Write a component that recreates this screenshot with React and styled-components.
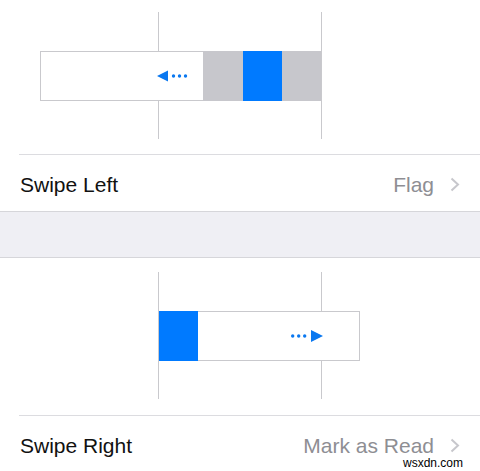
import React from "react";
import styled, { createGlobalStyle } from "styled-components";

const GlobalStyle = createGlobalStyle`
  html, body {
    margin: 0;
    padding: 0;
    background: #ffffff;
  }
  body {
    font-family: "Liberation Sans", Arial, sans-serif;
    -webkit-font-smoothing: antialiased;
  }
`;

const Page = styled.div`
  position: relative;
  width: 480px;
  height: 471px;
  overflow: hidden;
  background: #ffffff;
`;

const Section = styled.section`
  display: flex;
  flex-direction: column;
  background: #ffffff;
`;

const Preview = styled.div`
  padding: ${(p) => p.$top}px 0 ${(p) => p.$bottom}px 158px;
`;

/* the two grey guide lines mark the edges of a mail cell */
const Stage = styled.div`
  box-sizing: border-box;
  width: 164px;
  height: 127px;
  border-left: 1px solid #c9c9cd;
  border-right: 1px solid #c9c9cd;
  display: flex;
  align-items: center;
  justify-content: ${(p) => (p.$side === "left" ? "flex-end" : "flex-start")};
`;

const Strip = styled.div`
  flex-shrink: 0;
  display: flex;
  height: 50px;
  width: ${(p) => p.$width}px;
`;

const Cell = styled.div`
  flex: 1;
  box-sizing: border-box;
  display: flex;
  align-items: center;
  justify-content: flex-end;
  padding-right: ${(p) => p.$pad}px;
  background: #ffffff;
  border: 1px solid #c9c9cd;
  ${(p) => (p.$side === "left" ? "border-right: none;" : "border-left: none;")}
`;

const Action = styled.div`
  flex-shrink: 0;
  width: ${(p) => p.$w}px;
  background: ${(p) => (p.$blue ? "#007aff" : "#c7c7cc")};
`;

const Row = styled.div`
  box-sizing: border-box;
  display: flex;
  align-items: center;
  height: 57px;
  margin-left: 19px;
  padding: 2px 20px 0 1px;
  border-top: 1px solid #dcdce0;
`;

const Label = styled.span`
  flex: 1;
  font-size: 21px;
  line-height: 1;
  color: #111111;
`;

const Value = styled.span`
  font-size: 21px;
  line-height: 1;
  color: #8e8e93;
`;

const Chevron = styled.svg`
  margin-left: 16px;
  width: 10px;
  height: 15px;
`;

const Band = styled.div`
  box-sizing: border-box;
  height: 47px;
  background: #efeff4;
  border-top: 1px solid #d6d6da;
  border-bottom: 1px solid #d6d6da;
`;

const Watermark = styled.span`
  position: absolute;
  top: 457px;
  right: 17px;
  font-size: 12px;
  line-height: 12px;
  color: #000000;
  text-shadow: 0 0 2px #ffffff, 0 0 2px #ffffff;
`;

function DotsArrow({ dir }) {
  const left = dir === "left";
  return (
    <svg width="32" height="12" viewBox="0 0 32 12">
      {left ? (
        <>
          <polygon points="0,6 11,0.5 11,11.5" fill="#0a78f0" />
          <circle cx="16.5" cy="6" r="1.7" fill="#0a78f0" />
          <circle cx="22.5" cy="6" r="1.7" fill="#0a78f0" />
          <circle cx="28.5" cy="6" r="1.7" fill="#0a78f0" />
        </>
      ) : (
        <>
          <circle cx="1.7" cy="6" r="1.7" fill="#0a78f0" />
          <circle cx="7.7" cy="6" r="1.7" fill="#0a78f0" />
          <circle cx="13.7" cy="6" r="1.7" fill="#0a78f0" />
          <polygon points="32,6 20,0 20,12" fill="#0a78f0" />
        </>
      )}
    </svg>
  );
}

function SettingRow({ label, value }) {
  return (
    <Row>
      <Label>{label}</Label>
      <Value>{value}</Value>
      <Chevron viewBox="0 0 10 15">
        <polyline
          points="1.5,1.5 8,7.5 1.5,13.5"
          fill="none"
          stroke="#c7c7cc"
          strokeWidth="2"
        />
      </Chevron>
    </Row>
  );
}

export default function App() {
  return (
    <>
      <GlobalStyle />
      <Page>
        <Section>
          <Preview $top={12} $bottom={15}>
            <Stage $side="left">
              <Strip $width={281}>
                <Cell $side="left" $pad={14}>
                  <DotsArrow dir="left" />
                </Cell>
                <Action $w={40} />
                <Action $w={39} $blue />
                <Action $w={39} />
              </Strip>
            </Stage>
          </Preview>
          <SettingRow label="Swipe Left" value="Flag" />
        </Section>
        <Band />
        <Section>
          <Preview $top={14} $bottom={16}>
            <Stage $side="right">
              <Strip $width={201}>
                <Action $w={39} $blue />
                <Cell $side="right" $pad={36}>
                  <DotsArrow dir="right" />
                </Cell>
              </Strip>
            </Stage>
          </Preview>
          <SettingRow label="Swipe Right" value="Mark as Read" />
        </Section>
        <Watermark>wsxdn.com</Watermark>
      </Page>
    </>
  );
}
